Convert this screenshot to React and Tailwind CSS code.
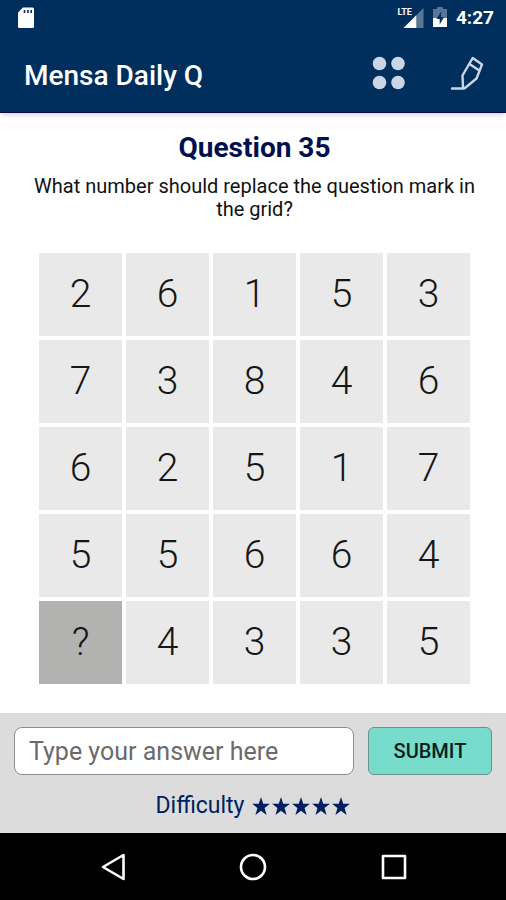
import React from "react";

const rows = [
  ["2", "6", "1", "5", "3"],
  ["7", "3", "8", "4", "6"],
  ["6", "2", "5", "1", "7"],
  ["5", "5", "6", "6", "4"],
  ["?", "4", "3", "3", "5"],
];

function StatusBar() {
  return (
    <div className="flex h-9 items-center justify-between border-b border-[#002a52] pr-3 pl-4 text-white">
      <svg className="h-6 w-5" viewBox="0 0 20 24" aria-hidden="true">
        <path d="M7 1.500h9.500a1.500 1.500 0 0 1 1.500 1.500v17.500a1.500 1.500 0 0 1-1.500 1.500H3.500A1.500 1.500 0 0 1 2 20.500V6.500z" fill="#fff" />
        <path d="M8.500 4v3M12 4v3M15.200 4v3" stroke="#002e5d" strokeWidth="1.600" />
      </svg>
      <div className="flex items-center gap-2">
        <div className="flex items-start">
          <span className="-mr-3 text-[9px] leading-3 font-bold">LTE</span>
          <svg className="h-6 w-6" viewBox="0 0 24 24" aria-hidden="true">
            <path d="M23.500 2v20H17V8.500z" fill="#fff" opacity="0.35" />
            <path d="M16.500 9v13H3.500z" fill="#fff" />
          </svg>
        </div>
        <svg className="h-6 w-4" viewBox="2 0 16 24" aria-hidden="true">
          <path d="M7 1h6v2h4v9H3V3h4z" fill="#fff" opacity="0.35" />
          <path d="M3 12h14v9H3z" fill="#fff" />
          <path d="M11.500 5 6.500 13h3.200v5.500L14 11h-3.200z" fill="#002e5d" />
        </svg>
        <span className="pt-0.5 text-[19px] font-bold">4:27</span>
      </div>
    </div>
  );
}

function AppBar() {
  return (
    <div className="flex h-[76px] items-center justify-between pr-5 pl-6">
      <h1 className="pt-[3px] text-[28px] font-medium text-white">Mensa Daily Q</h1>
      <div className="flex items-center gap-[42px]">
        <button type="button" aria-label="All questions" className="text-[#ccd5e6]">
          <svg className="size-9" viewBox="0 0 36 36" fill="currentColor" aria-hidden="true">
            <circle cx="7.500" cy="7.500" r="6.800" />
            <circle cx="26" cy="7.500" r="6.800" />
            <circle cx="7.500" cy="26.500" r="6.800" />
            <circle cx="26" cy="26.500" r="6.800" />
          </svg>
        </button>
        <button type="button" aria-label="Notes" className="text-[#ccd5e6]">
          <svg className="size-9" viewBox="0 0 36 36" fill="none" stroke="currentColor" strokeWidth="2.400" strokeLinejoin="round" strokeLinecap="round" aria-hidden="true">
            <path d="M2 32.500h11.500l1.500-.5L26.500 22.500 32 8.500 22.700 2 12.500 19.500 13 32" />
            <path d="m19.500 8 9.800 6.500" />
          </svg>
        </button>
      </div>
    </div>
  );
}

function NumberGrid() {
  return (
    <table aria-label="Number grid" className="mt-7 w-full table-fixed border-collapse font-[Roboto,sans-serif] text-[39px] leading-none font-light text-[#161616]">
      <tbody>
        {rows.map((row, r) => (
          <tr key={r} className="h-[87px]">
            {row.map((cell, c) => (
              <td
                key={c}
                className={
                  cell === "?"
                    ? "border-4 border-white bg-[#b2b2b0] p-0 text-center"
                    : "border-4 border-white bg-[#e9e9e9] p-0 text-center"
                }
              >
                {cell}
              </td>
            ))}
          </tr>
        ))}
      </tbody>
    </table>
  );
}

export default function App() {
  return (
    <div className="flex min-h-screen flex-col bg-white font-[Roboto,sans-serif]">
      <header className="border-b border-[#0a0a50] bg-[#002e5d] shadow-md">
        <StatusBar />
        <AppBar />
      </header>

      <main className="flex-1 pt-[17px] pr-8 pl-[35px] text-center">
        <h2 className="text-[28px] leading-9 font-bold text-[#00104f]">Question 35</h2>
        <p className="-mx-2 mt-[9px] text-xl leading-[23px] text-[#111]">
          What number should replace the question mark in the grid?
        </p>
        <NumberGrid />
      </main>

      <footer>
        <div className="bg-[#dcdcdc] px-[14px] pt-[14px] pb-3">
          <form className="flex gap-[14px]" onSubmit={(e) => e.preventDefault()}>
            <input
              type="text"
              aria-label="Your answer"
              placeholder="Type your answer here"
              className="h-12 min-w-0 flex-1 rounded-lg border border-[#8c8c8c] bg-white px-[14px] text-[25px] text-black placeholder:text-[#6b6b6b] placeholder:opacity-100"
            />
            <button type="submit" className="h-12 w-[124px] rounded-md border border-[#6f8f8b] bg-[#77dccb] text-[20px] font-medium text-[#0c1f1d]">
              SUBMIT
            </button>
          </form>
          <div className="mt-4 flex items-center justify-center gap-[6px] text-[#001f60]">
            <span className="text-[23px] leading-[30px]">Difficulty</span>
            <div role="img" aria-label="5 out of 5" className="flex">
              {[0, 1, 2, 3, 4].map((n) => (
                <svg key={n} className="size-5" viewBox="1 1 18 18" fill="currentColor" aria-hidden="true">
                  <path d="m10 2 2 6h6l-4.800 3.700L15 18l-5-3.800L5 18l1.800-6.300L2 8h6z" />
                </svg>
              ))}
            </div>
          </div>
        </div>
        <nav aria-label="System" className="flex h-[67px] items-center justify-center gap-28 bg-black text-white">
          <button type="button" aria-label="Back">
            <svg className="size-7" viewBox="0 0 28 28" fill="none" stroke="currentColor" strokeWidth="2.600" strokeLinejoin="round" aria-hidden="true">
              <path d="M24.500 2v24L4 14z" />
            </svg>
          </button>
          <button type="button" aria-label="Home">
            <svg className="size-7" viewBox="0 0 28 28" fill="none" stroke="currentColor" strokeWidth="2.600" aria-hidden="true">
              <circle cx="14" cy="14" r="12" />
            </svg>
          </button>
          <button type="button" aria-label="Recent apps">
            <svg className="size-7" viewBox="0 0 28 28" fill="none" stroke="currentColor" strokeWidth="2.600" strokeLinejoin="round" aria-hidden="true">
              <rect x="4" y="3" width="22" height="22" />
            </svg>
          </button>
        </nav>
      </footer>
    </div>
  );
}
